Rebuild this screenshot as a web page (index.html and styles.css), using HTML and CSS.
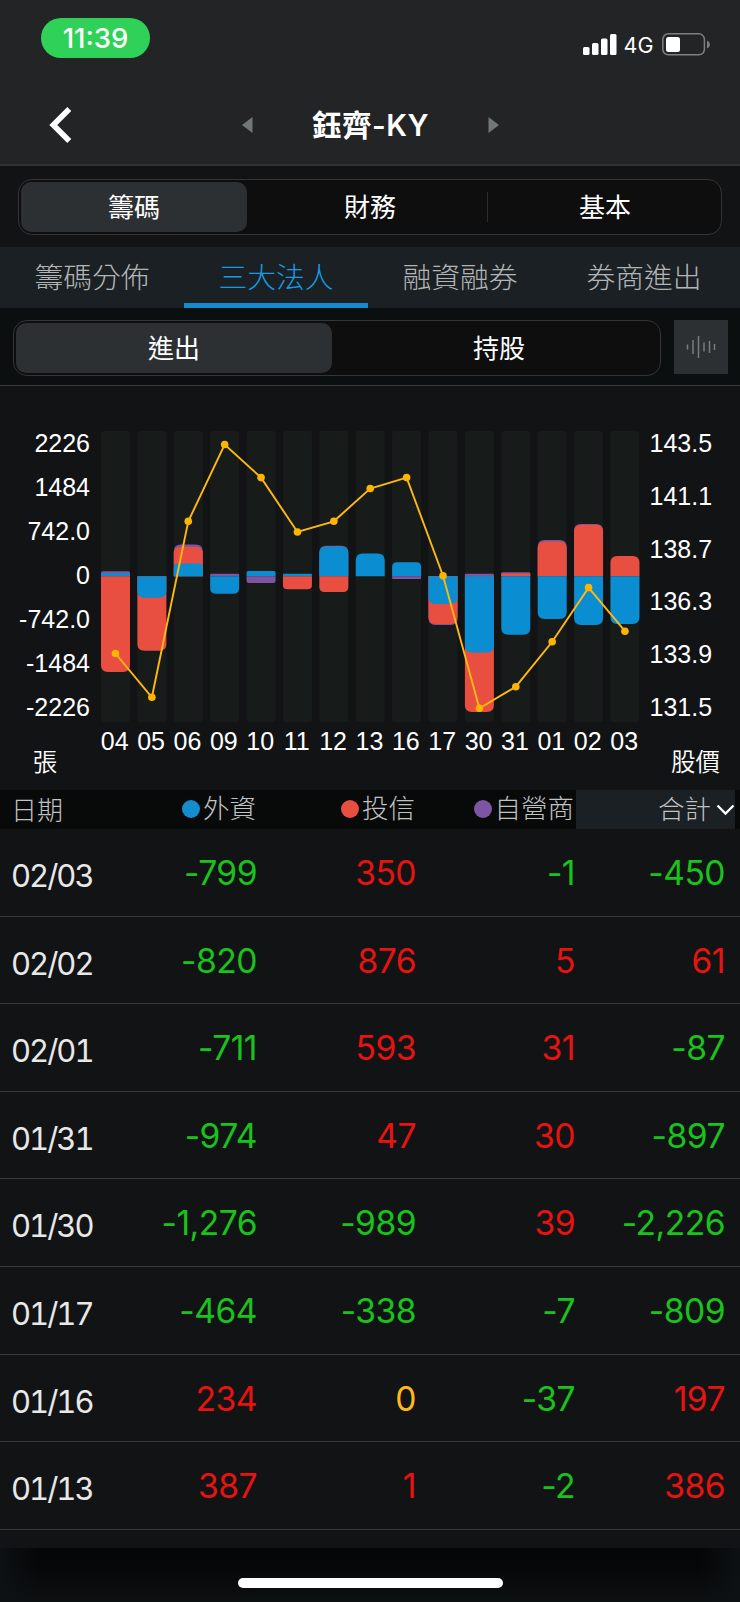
FILE: index.html
```html
<!DOCTYPE html>
<html lang="zh-Hant">
<head>
    <meta charset="UTF-8">
    <meta name="viewport" content="width=device-width, initial-scale=1.0">
    <title>鈺齊-KY</title>
    <link rel="stylesheet" href="styles.css">
</head>
<body>
    <header class="header">
        <div class="status-bar">
            <div class="time">11:39</div>
            <div class="status-icons">
                <svg class="signal" width="34" height="21" viewBox="0 0 34 21" fill="#fff">
                    <rect x="0" y="13" width="6.5" height="8" rx="1.5"/>
                    <rect x="9" y="9" width="6.5" height="12" rx="1.5"/>
                    <rect x="18" y="4.5" width="6.5" height="16.5" rx="1.5"/>
                    <rect x="27" y="0" width="6.5" height="21" rx="1.5"/>
                </svg>
                <span class="network">4G</span>
                <svg class="battery" width="49" height="23" viewBox="0 0 49 23">
                    <rect x="0.8" y="0.8" width="41.6" height="21" rx="5.5" fill="none" stroke="#7d7f80" stroke-width="1.5"/>
                    <rect x="4" y="4" width="14" height="15" rx="2.5" fill="#fff"/>
                    <path d="M45 7.5 Q48 9 48 11.5 Q48 14 45 15.5 Z" fill="#7d7f80"/>
                </svg>
            </div>
        </div>
        <nav class="nav-bar">
            <svg class="back" width="24" height="38" viewBox="0 0 24 38">
                <path d="M21.3 3 L5.3 19 L21.3 35" fill="none" stroke="#fff" stroke-width="5.6"/>
            </svg>
            <div class="stock">
                <svg width="11" height="16" viewBox="0 0 11 16"><path d="M10.5 0 V16 L0 8 Z" fill="#717677"/></svg>
                <h1>鈺齊-KY</h1>
                <svg width="11" height="16" viewBox="0 0 11 16"><path d="M0.5 0 V16 L11 8 Z" fill="#717677"/></svg>
            </div>
        </nav>
    </header>

    <section class="main-switch">
        <div class="segment">
            <button class="segment-item active">籌碼</button>
            <button class="segment-item">財務</button>
            <button class="segment-item divided">基本</button>
        </div>
    </section>

    <div class="tabs">
        <a class="tab">籌碼分佈</a>
        <a class="tab active">三大法人</a>
        <a class="tab">融資融券</a>
        <a class="tab">券商進出</a>
    </div>

    <section class="sub-switch">
        <div class="segment">
            <button class="segment-item active">進出</button>
            <button class="segment-item">持股</button>
        </div>
        <button class="wave-button">
            <svg width="30" height="22" viewBox="0 0 30 22" stroke="#777b7d" stroke-width="1.5">
                <path d="M1.5 8.5v5 M7 4v14 M12.5 0v22 M18 6.5v9 M23.5 5v12 M28.5 8v6"/>
            </svg>
        </button>
    </section>

    <svg class="chart" id="chart" width="740" height="404" viewBox="0 386 740 404">
        <g id="columns"></g>
        <g id="bars"></g>
        <g id="price"></g>
        <g id="labels">
            <text class="unit" x="45" y="771" text-anchor="middle">張</text>
            <text class="unit" x="695.5" y="771" text-anchor="middle">股價</text>
        </g>
    </svg>

    <div class="table">
        <div class="table-head">
            <div class="col-date">日期</div>
            <div class="col"><i class="dot foreign"></i>外資</div>
            <div class="col"><i class="dot trust"></i>投信</div>
            <div class="col"><i class="dot dealer"></i>自營商</div>
            <div class="col sorted">合計<svg width="19" height="12" viewBox="0 0 19 12"><path d="M1.5 1.5 L9.5 9.5 L17.5 1.5" fill="none" stroke="#fff" stroke-width="2.3"/></svg></div>
        </div>
        <div class="row"><div class="col-date">02/03</div><div class="down">-799</div><div class="up">350</div><div class="down">-1</div><div class="down">-450</div></div>
        <div class="row"><div class="col-date">02/02</div><div class="down">-820</div><div class="up">876</div><div class="up">5</div><div class="up">61</div></div>
        <div class="row"><div class="col-date">02/01</div><div class="down">-711</div><div class="up">593</div><div class="up">31</div><div class="down">-87</div></div>
        <div class="row"><div class="col-date">01/31</div><div class="down">-974</div><div class="up">47</div><div class="up">30</div><div class="down">-897</div></div>
        <div class="row"><div class="col-date">01/30</div><div class="down">-1,276</div><div class="down">-989</div><div class="up">39</div><div class="down">-2,226</div></div>
        <div class="row"><div class="col-date">01/17</div><div class="down">-464</div><div class="down">-338</div><div class="down">-7</div><div class="down">-809</div></div>
        <div class="row"><div class="col-date">01/16</div><div class="up">234</div><div class="flat">0</div><div class="down">-37</div><div class="up">197</div></div>
        <div class="row"><div class="col-date">01/13</div><div class="up">387</div><div class="up">1</div><div class="down">-2</div><div class="up">386</div></div>
    </div>

    <footer class="footer">
        <div class="home-indicator"></div>
    </footer>

    <script src="chart.js"></script>
</body>
</html>
```

FILE: styles.css
```css
* {
    box-sizing: border-box;
}

body {
    margin: 0;
    width: 740px;
    height: 1602px;
    overflow: hidden;
    display: flex;
    flex-direction: column;
    background-color: #121315;
    color: #fff;
    font-family: Inter, "Noto Sans CJK TC", sans-serif;
}

button {
    margin: 0;
    padding: 0;
    border: none;
    background: none;
    color: #fff;
    font-family: inherit;
}

.header {
    height: 166px;
    flex: none;
    background-color: #222425;
    border-bottom: 2px solid #303234;
}

.status-bar {
    height: 86px;
    padding: 18px 29px 0 41px;
    display: flex;
    justify-content: space-between;
    align-items: flex-start;
}

.time {
    width: 109px;
    height: 40px;
    border-radius: 20px;
    background-color: #30d158;
    font-size: 27.5px;
    font-weight: 500;
    line-height: 41px;
    text-align: center;
}

.status-icons {
    display: flex;
    align-items: center;
    padding-top: 13px;
}

.network {
    width: 45px;
    padding: 1px 2px 0 0;
    text-align: center;
    font-size: 21.5px;
    line-height: 26px;
}

.nav-bar {
    height: 78px;
    display: flex;
    align-items: center;
    padding-left: 48px;
}

.stock {
    width: 257px;
    margin-left: 170px;
    display: flex;
    align-items: center;
    justify-content: space-between;
}

.stock h1 {
    margin: 0;
    font-size: 29.5px;
    font-weight: 600;
    line-height: 40px;
    letter-spacing: 0.5px;
}

.main-switch {
    flex: none;
    height: 81px;
    padding: 13px 18px 0;
}

.segment {
    display: flex;
    height: 56px;
    padding: 2px;
    border: 1.5px solid #333536;
    border-radius: 14px;
    background-color: #0e0e0e;
}

.segment-item {
    flex: 1;
    padding-bottom: 3px;
    border-radius: 10px;
    font-size: 26px;
}

.main-switch .segment-item {
    flex: none;
    width: 226px;
    margin-right: 10px;
}

.main-switch .segment-item:last-child {
    margin-right: 0;
}

.segment-item.active {
    background-color: #2d3032;
}

.main-switch .segment-item.divided {
    width: 236px;
    margin-left: -6px;
    background: linear-gradient(#292b2c, #292b2c) no-repeat 0 50% / 1px 30px;
    border-radius: 0;
}

.tabs {
    flex: none;
    display: flex;
    height: 61px;
    background-color: #1a2023;
}

.tab {
    width: 184px;
    text-align: center;
    font-size: 28.8px;
    font-weight: 300;
    line-height: 61px;
    color: #b2b5b6;
}

.tab.active {
    color: #159be2;
    border-bottom: 5px solid #138dce;
}

.sub-switch {
    flex: none;
    display: flex;
    justify-content: space-between;
    height: 78px;
    padding: 12px 12px 0 13px;
    background-color: #0c0f10;
    border-bottom: 1px solid #37393a;
}

.sub-switch .segment {
    width: 648px;
}

.sub-switch .segment-item {
    flex: none;
    width: 316px;
    margin-right: 9px;
}

.wave-button {
    width: 54px;
    height: 54px;
    background-color: #2d3032;
}

.wave-button svg {
    display: block;
    margin: 0 auto;
}

.chart {
    flex: none;
    display: block;
}

.chart text {
    fill: #fff;
    font-family: "Liberation Sans", "Noto Sans CJK TC", sans-serif;
    font-size: 25px;
}

.chart text.unit {
    font-family: "Noto Sans CJK TC", sans-serif;
    font-size: 24.5px;
    font-weight: 350;
}

.table {
    flex: none;
}

.table-head,
.row {
    display: grid;
    grid-template-columns: 97px 160px 159px 159px 165px;
}

.table-head {
    height: 39px;
    background-color: #080909;
    font-size: 26.5px;
    font-weight: 300;
    line-height: 37px;
    color: #c0c2c3;
}

.col {
    display: flex;
    align-items: center;
    justify-content: flex-end;
    padding-right: 1px;
    padding-bottom: 2px;
}

.col-date {
    padding-left: 11px;
}

.table-head .col-date {
    padding-top: 2px;
    font-size: 26px;
}

.dot {
    width: 18px;
    height: 18px;
    margin-right: 3px;
    border-radius: 50%;
}

.foreign {
    background-color: #138dce;
}

.trust {
    background-color: #e84f40;
}

.dealer {
    background-color: #7e55a3;
}

.sorted {
    width: 159px;
    margin-left: 1px;
    padding-right: 0;
    padding-bottom: 0;
    background-color: #1a2023;
}

.sorted svg {
    margin-left: 5px;
}

.row {
    height: 87.6px;
    border-bottom: 1.5px solid #37393b;
    line-height: 88px;
    font-size: 33.6px;
    text-align: right;
    letter-spacing: -0.5px;
}

.row div:last-child {
    padding-right: 15px;
}

.row .col-date {
    padding-top: 3px;
    text-align: left;
    font-size: 31px;
    letter-spacing: -2px;
    font-variant-numeric: tabular-nums;
    color: #e8e8e8;
}

.up {
    color: #e61310;
}

.down {
    color: #19c31b;
}

.flat {
    color: #ffb81c;
}

.footer {
    flex: none;
    height: 54px;
    margin-top: auto;
    padding-top: 30px;
    background: linear-gradient(90deg, #0d1113, transparent 40px, transparent 700px, #0d1113), linear-gradient(#050607 30%, #0d1011);
}

.home-indicator {
    width: 265px;
    height: 10px;
    margin: 0 auto;
    border-radius: 5px;
    background-color: #fff;
}
```

FILE: chart.js
```javascript
const BLUE = '#0b8dd1';
const RED = '#e84f40';
const PURPLE = '#7e55a3';

const ZERO = 576.3;
const FIRST = 115.5;
const STEP = 36.39;
const BAR = 29;

// each segment is [color, end of the bar], drawn outermost first
const days = [
    { day: '04', y: 653.5, up: [[PURPLE, 571.3], [BLUE, 573.2]], down: [[RED, 672]] },
    { day: '05', y: 697.3, up: [], down: [[RED, 650.7], [BLUE, 597.8]] },
    { day: '06', y: 521.3, up: [[PURPLE, 544.4], [RED, 546.8], [BLUE, 563.5]], down: [] },
    { day: '09', y: 444.5, up: [[PURPLE, 573.8]], down: [[BLUE, 593.8]] },
    { day: '10', y: 477.6, up: [[BLUE, 571]], down: [[PURPLE, 583]] },
    { day: '11', y: 532, up: [[BLUE, 573.8]], down: [[RED, 589.2]] },
    { day: '12', y: 521.3, up: [[PURPLE, 545.8], [BLUE, 546.6]], down: [[RED, 592]] },
    { day: '13', y: 488.5, up: [[BLUE, 553.5]], down: [] },
    { day: '16', y: 477.6, up: [[BLUE, 562.3]], down: [[PURPLE, 579]] },
    { day: '17', y: 575.7, up: [], down: [[PURPLE, 624.9], [RED, 624.1], [BLUE, 604]] },
    { day: '30', y: 708.2, up: [[PURPLE, 573.8]], down: [[RED, 712], [BLUE, 652.5]] },
    { day: '31', y: 686.7, up: [[PURPLE, 572.2], [RED, 573.6]], down: [[BLUE, 634.8]] },
    { day: '01', y: 641.8, up: [[PURPLE, 540], [RED, 541.6]], down: [[BLUE, 619]] },
    { day: '02', y: 587.6, up: [[PURPLE, 524], [RED, 524.7]], down: [[BLUE, 625]] },
    { day: '03', y: 631.2, up: [[RED, 556]], down: [[BLUE, 624]] }
];

function add(parent, name, attrs, text) {
    const el = document.createElementNS('http://www.w3.org/2000/svg', name);
    for (const key in attrs) {
        el.setAttribute(key, attrs[key]);
    }
    if (text !== undefined) {
        el.textContent = text;
    }
    document.getElementById(parent).appendChild(el);
}

// bar from the zero line to `end`, with only the far corners rounded
function drawBar(x, end, color) {
    const r = Math.min(7, Math.abs(end - ZERO) / 3);
    const dir = end < ZERO ? 1 : -1;
    const near = end + r * dir;
    add('bars', 'path', {
        d: `M${x} ${ZERO} V${near} Q${x} ${end} ${x + r} ${end} H${x + BAR - r} Q${x + BAR} ${end} ${x + BAR} ${near} V${ZERO} Z`,
        fill: color
    });
}

const points = [];
days.forEach(function(d, i) {
    const cx = FIRST + i * STEP;
    const x = cx - BAR / 2;
    add('columns', 'rect', { x: x, y: 431, width: BAR, height: 291, rx: 3, fill: '#171c1b' });
    d.up.concat(d.down).forEach(function(seg) {
        drawBar(x, seg[1], seg[0]);
    });
    points.push(cx + ',' + d.y);
    add('labels', 'text', { x: cx - 0.8, y: 750, 'text-anchor': 'middle' }, d.day);
});

add('price', 'polyline', { points: points.join(' '), fill: 'none', stroke: '#ffb810', 'stroke-width': 1.9 });
days.forEach(function(d, i) {
    add('price', 'circle', { cx: FIRST + i * STEP, cy: d.y, r: 3.8, fill: '#ffb400' });
});

['2226', '1484', '742.0', '0', '-742.0', '-1484', '-2226'].forEach(function(label, i) {
    add('labels', 'text', { x: 90, y: 451.7 + i * 44.1, 'text-anchor': 'end' }, label);
});
['143.5', '141.1', '138.7', '136.3', '133.9', '131.5'].forEach(function(label, i) {
    add('labels', 'text', { x: 649.5, y: 451.7 + i * 52.9 }, label);
});
```
